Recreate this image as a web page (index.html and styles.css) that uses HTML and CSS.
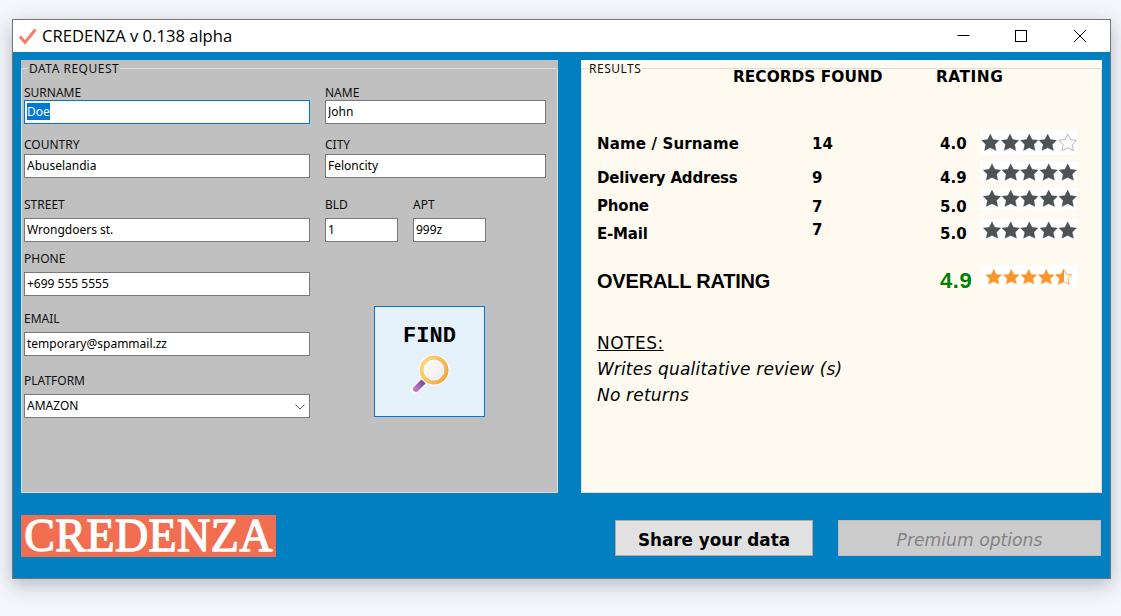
FILE: index.html
```html
<!DOCTYPE html>
<html lang="en">
<head>
<meta charset="utf-8">
<title>CREDENZA</title>
<link rel="stylesheet" href="styles.css">
</head>
<body>
<svg class="defs" width="0" height="0" aria-hidden="true">
  <defs>
    <polygon id="star" points="9,0 11.8,5.6 17.8,6.3 13.6,10.5 14.8,16.6 9,13.8 3.2,16.6 4.4,10.5 0.2,6.3 6.2,5.6"/>
    <linearGradient id="half" x1="0" x2="1" y1="0" y2="0"><stop offset="0.5" stop-color="#f7962c"/><stop offset="0.5" stop-color="#fffaf0"/></linearGradient>
    <linearGradient id="ring" x1="0" x2="1" y1="0" y2="0.6"><stop offset="0" stop-color="#fde08c"/><stop offset="1" stop-color="#f3a93a"/></linearGradient>
    <linearGradient id="lens" x1="0" x2="1" y1="0" y2="1"><stop offset="0" stop-color="#fffdf8"/><stop offset="1" stop-color="#efe9f3"/></linearGradient>
    <linearGradient id="grip" x1="0" x2="1" y1="1" y2="0"><stop offset="0" stop-color="#c078c0"/><stop offset="1" stop-color="#7d4f9c"/></linearGradient>
  </defs>
</svg>
<main class="window">
  <header class="titlebar">
    <svg class="app-icon" width="18" height="17" viewBox="0 0 18 17"><path d="M1 8.5 L6 14.5 L16.5 1.5" fill="none" stroke="#f4806c" stroke-width="3"/></svg>
    <span class="app-title">CREDENZA v 0.138 alpha</span>
    <div class="controls">
      <svg class="ctl" width="58" height="14" viewBox="0 0 58 14"><path d="M22.5 6.5 H34.5" stroke="#000" fill="none"/></svg>
      <svg class="ctl" width="58" height="14" viewBox="0 0 58 14"><rect x="22.5" y="1.5" width="11" height="11" stroke="#000" fill="none"/></svg>
      <svg class="ctl" width="58" height="14" viewBox="0 0 58 14"><path d="M23 1 L35 13 M35 1 L23 13" stroke="#000" fill="none"/></svg>
    </div>
  </header>

  <div class="panels">
    <section class="panel panel-form">
      <fieldset class="group">
        <legend class="legend">DATA REQUEST</legend>
        <div class="row">
          <div class="field wide tight"><label class="label" for="surname">SURNAME</label><input class="input active" id="surname" value="Doe"></div>
          <div class="field mid tight"><label class="label" for="name">NAME</label><input class="input" id="name" value="John"></div>
        </div>
        <div class="row row2">
          <div class="field wide medium"><label class="label" for="country">COUNTRY</label><input class="input" id="country" value="Abuselandia"></div>
          <div class="field mid medium"><label class="label" for="city">CITY</label><input class="input" id="city" value="Feloncity"></div>
        </div>
        <div class="row row3">
          <div class="field wide"><label class="label" for="street">STREET</label><input class="input" id="street" value="Wrongdoers st."></div>
          <div class="field small"><label class="label" for="bld">BLD</label><input class="input" id="bld" value="1"></div>
          <div class="field small"><label class="label" for="apt">APT</label><input class="input" id="apt" value="999z"></div>
        </div>
        <div class="lower">
          <div class="stack">
            <div class="field wide row4"><label class="label" for="phone">PHONE</label><input class="input" id="phone" value="+699 555 5555"></div>
            <div class="field wide row5"><label class="label" for="email">EMAIL</label><input class="input" id="email" value="temporary@spammail.zz"></div>
            <div class="field wide row6"><label class="label" for="platform">PLATFORM</label>
              <div class="select-wrap">
                <select class="input select" id="platform"><option>AMAZON</option></select>
                <svg class="chevron" width="10" height="6" viewBox="0 0 10 6"><path d="M0.5 0.5 L5 5 L9.5 0.5" fill="none" stroke="#555"/></svg>
              </div>
            </div>
          </div>
          <button class="find" type="button">
            <span class="find-text">FIND</span>
            <svg width="42" height="42" viewBox="0 0 42 42">
              <path d="M16 27 L6 37" stroke="#fff" stroke-width="8" stroke-linecap="round"/>
              <path d="M18 25 L13 30" stroke="#666" stroke-width="3"/>
              <path d="M13.5 29.5 L7 36" stroke="url(#grip)" stroke-width="6" stroke-linecap="round"/>
              <circle cx="25" cy="17" r="15.5" fill="#fff"/>
              <circle cx="25" cy="17" r="14.5" fill="url(#ring)"/>
              <circle cx="25" cy="17" r="10.5" fill="url(#lens)"/>
            </svg>
          </button>
        </div>
      </fieldset>
    </section>

    <section class="panel panel-results">
      <fieldset class="group">
        <legend class="legend">RESULTS</legend>
        <div class="res-head">
          <span class="head-found">RECORDS FOUND</span>
          <span class="head-rating">RATING</span>
        </div>
        <div class="res-row r1">
          <span class="res-name">Name / Surname</span><span class="res-num">14</span><span class="res-num">4.0</span>
          <svg class="stars s1" width="97" height="25" viewBox="0 0 97 25">
            <use href="#star" x="1.3" y="4"/><use href="#star" x="21" y="4"/><use href="#star" x="40.3" y="4"/><use href="#star" x="58.7" y="4"/><use href="#star" class="empty" x="78.7" y="4"/>
          </svg>
        </div>
        <div class="res-row r2">
          <span class="res-name">Delivery Address</span><span class="res-num">9</span><span class="res-num">4.9</span>
          <svg class="stars s2" width="97" height="22" viewBox="0 0 97 22">
            <use href="#star" x="3" y="2.7"/><use href="#star" x="21.7" y="2.7"/><use href="#star" x="40.3" y="2.7"/><use href="#star" x="59.7" y="2.7"/><use href="#star" x="78.7" y="2.7"/>
          </svg>
        </div>
        <div class="res-row r3">
          <span class="res-name">Phone</span><span class="res-num down">7</span><span class="res-num down">5.0</span>
          <svg class="stars s3" width="97" height="22" viewBox="0 0 97 22">
            <use href="#star" x="3" y="2"/><use href="#star" x="21.7" y="2"/><use href="#star" x="40.3" y="2"/><use href="#star" x="59.7" y="2"/><use href="#star" x="78.7" y="2"/>
          </svg>
        </div>
        <div class="res-row r4">
          <span class="res-name">E-Mail</span><span class="res-num up">7</span><span class="res-num">5.0</span>
          <svg class="stars s4" width="97" height="21" viewBox="0 0 97 21">
            <use href="#star" x="3" y="2.7"/><use href="#star" x="21.7" y="2.7"/><use href="#star" x="40.3" y="2.7"/><use href="#star" x="59.7" y="2.7"/><use href="#star" x="78.7" y="2.7"/>
          </svg>
        </div>
        <div class="res-row overall">
          <span class="overall-name">OVERALL RATING</span><span></span><span class="overall-num">4.9</span>
          <svg class="stars gold" width="97" height="22" viewBox="0 0 97 22">
            <g transform="translate(5.5 3) scale(.92)"><use href="#star"/></g>
            <g transform="translate(23 3) scale(.92)"><use href="#star"/></g>
            <g transform="translate(40.5 3) scale(.92)"><use href="#star"/></g>
            <g transform="translate(58 3) scale(.92)"><use href="#star"/></g>
            <g transform="translate(75.5 3) scale(.92)"><use href="#star" class="half"/></g>
          </svg>
        </div>
        <div class="notes">
          <p class="notes-title">NOTES:</p>
          <p class="note">Writes qualitative review (s)</p>
          <p class="note">No returns</p>
        </div>
      </fieldset>
    </section>
  </div>

  <footer class="footer">
    <div class="logo">CREDENZA</div>
    <button class="btn btn-share" type="button">Share your data</button>
    <button class="btn btn-premium" type="button" disabled>Premium options</button>
  </footer>
</main>
<script src="script.js"></script>
</body>
</html>
```

FILE: styles.css
```css
* { box-sizing: border-box; }
html, body { margin: 0; height: 100%; }
body { background: #f5f6fb; overflow: hidden; font-family: "Liberation Sans", sans-serif; }
.defs { display: block; height: 0; }

.window {
  position: absolute;
  left: 12px;
  top: 19px;
  width: 1099px;
  height: 560px;
  border: 1px solid #747474;
  background: #0080c0;
  box-shadow: 0 6px 18px rgba(60, 70, 90, .35);
  display: flex;
  flex-direction: column;
}

.titlebar {
  height: 32px;
  background: #fff;
  display: flex;
  align-items: center;
  padding-left: 6px;
}
.app-icon { margin-right: 5px; }
.app-title { font: 16.6px/20px "Open Sans", sans-serif; color: #000; }
.controls { margin-left: auto; display: flex; padding-right: 1px; }
.ctl { display: block; }

.panels { display: flex; gap: 23px; padding: 8px 8px 0; }
.panel { height: 433px; }
.panel-form { width: 537px; background: #c0c0c0; }
.panel-results { width: 521px; background: #fffaf0; }
.group { margin: 0; padding: 0; height: 100%; border: 1px solid #dcdcdc; border-radius: 2px; min-width: 0; }
.legend {
  margin-left: 4px;
  padding: 2px 1px 0;
  font: 12px/14px "Noto Sans", sans-serif;
  letter-spacing: .5px;
  color: #101010;
}

.panel-form .group { padding: 9px 0 0 2px; }
.row { display: flex; gap: 15px; }
.row2 { margin-top: 13px; }
.row3 { margin-top: 19px; }
.field { display: flex; flex-direction: column; }
.wide { width: 286px; }
.mid { width: 221px; }
.small { width: 73px; }
.label { font: 12px/14px "Noto Sans", sans-serif; color: #101010; padding-top: 1px; margin-bottom: 6px; }
.tight .label { margin-bottom: 0; }
.medium .label { margin-bottom: 2px; }
.input {
  height: 24px;
  width: 100%;
  border: 1px solid #7a7a7a;
  background: #fff;
  padding: 0 2px 2px;
  font: 12px "Noto Sans", sans-serif;
  color: #000;
  outline: none;
  border-radius: 0;
}
.input.active, .input:focus { border-color: #0078d7; }
.input::selection { background: #0078d7; color: #fff; }

.lower { display: flex; align-items: flex-end; }
.row4 { margin-top: 9px; }
.row5 { margin-top: 15px; }
.row6 { margin-top: 17px; }
.select-wrap { position: relative; }
.select { appearance: none; display: block; }
.chevron { position: absolute; right: 5px; top: 10px; pointer-events: none; }
.find {
  width: 111px;
  height: 111px;
  margin: 0 0 1px 64px;
  border: 1px solid #0078d7;
  background: #e5f1fb;
  display: flex;
  flex-direction: column;
  align-items: center;
  padding: 18px 0 0;
  border-radius: 0;
}
.find-text { font: bold 22px/24px "Liberation Mono", monospace; color: #000; margin-bottom: 4px; }

.panel-results .group { padding: 0 0 0 15px; }
.panel-results .legend { margin-left: -9px; }
.res-head {
  margin-top: -9px;
  display: flex;
  height: 20px;
  font: bold 15.4px/20px "DejaVu Sans", sans-serif;
  color: #000;
}
.head-found { margin-left: 136px; width: 203px; }
.head-rating { letter-spacing: .5px; }

.res-row {
  display: grid;
  grid-template-columns: 215px 128px 40px 97px;
  align-items: start;
  height: 20px;
  font: bold 15px/20px "DejaVu Sans", sans-serif;
  color: #000;
}
.res-name { letter-spacing: -.2px; }
.r1 .res-name { letter-spacing: .15px; }
.r1 { margin-top: 47px; }
.r2 { margin-top: 14px; }
.r3 { margin-top: 8px; }
.r4 { margin-top: 8px; }
.down { margin-top: 1px; }
.up { margin-top: -4px; }
.stars { display: block; background: #fff; fill: #4d5256; stroke: #4d5256; stroke-width: .3; }
.s1 { margin-top: -4px; }
.s2 { margin-top: -7px; }
.s3 { margin-top: -8px; }
.s4 { margin-top: -5px; }
.empty { fill: #fff; stroke: #8a8a8a; stroke-width: .6; }
.overall { margin-top: 25px; height: 24px; }
.overall-name { font: bold 20px/24px "Liberation Sans", sans-serif; letter-spacing: -.2px; }
.overall-num { font: bold 22px/24px "Liberation Sans", sans-serif; letter-spacing: .6px; color: #008000; }
.gold { fill: #f7962c; stroke: #fbc78e; stroke-width: .8; margin-top: -3px; }
.half { fill: url(#half); stroke: #f7962c; }

.notes { margin-top: 37px; font: 17px/26px "DejaVu Sans", sans-serif; letter-spacing: .2px; color: #000; }
.notes p { margin: 0; }
.notes-title { text-decoration: underline; letter-spacing: .5px; }
.note { font-style: italic; }

.footer { display: flex; align-items: flex-start; padding: 22px 9px 0 8px; }
.logo {
  width: 255px;
  height: 42px;
  background: #f16e50;
  color: #fff;
  font: 46px/42px "Liberation Serif", serif;
  letter-spacing: .4px;
  -webkit-text-stroke: 1.3px #fff;
  text-align: center;
  white-space: nowrap;
}
.btn {
  height: 36px;
  margin-top: 5px;
  font: bold 16.8px/20px "DejaVu Sans", sans-serif;
  border-radius: 0;
  padding: 4px 0 0;
}
.btn-share { width: 198px; margin-left: auto; background: #e1e1e1; border: 1px solid #adadad; color: #000; }
.btn-premium { width: 263px; margin-left: 25px; background: #cccccc; border: 1px solid #bfbfbf; color: #838383; font-weight: normal; font-style: italic; font-size: 17.2px; }
```

FILE: script.js
```js
document.getElementById('surname').select();
```
